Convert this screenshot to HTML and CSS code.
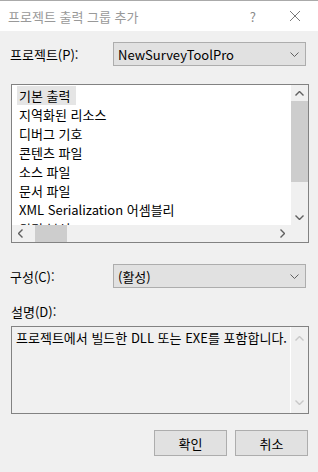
FILE: index.html
```html
<!DOCTYPE html>
<html lang="ko">

<head>
    <meta charset="UTF-8">
    <meta name="viewport" content="width=device-width, initial-scale=1.0">
    <title>프로젝트 출력 그룹 추가</title>
    <link rel="stylesheet" href="styles.css">
</head>

<body>

    <div class="titlebar">
        <span class="title">프로젝트 출력 그룹 추가</span>
        <span class="help">?</span>
        <svg class="close" width="12" height="12" viewBox="0 0 12 12">
            <path d="M1 1 L11 11 M11 1 L1 11" stroke="#7a7a7a" stroke-width="1" fill="none" />
        </svg>
    </div>

    <div class="dialog">
        <div class="row">
            <span class="label">프로젝트(P):</span>
            <div class="combo">
                <span>NewSurveyToolPro</span>
                <svg width="9" height="5" viewBox="0 0 9 5"><path d="M0.5 0.5 L4.5 4.5 L8.5 0.5" stroke="#606060" fill="none" /></svg>
            </div>
        </div>

        <div class="listbox">
            <div class="list-main">
                <ul class="items">
                    <li class="selected">기본 출력</li>
                    <li>지역화된 리소스</li>
                    <li>디버그 기호</li>
                    <li>콘텐츠 파일</li>
                    <li>소스 파일</li>
                    <li>문서 파일</li>
                    <li>XML Serialization 어셈블리</li>
                    <li>원격 분석</li>
                </ul>
                <div class="vscroll">
                    <svg width="9" height="5" viewBox="0 0 9 5"><path d="M0.5 4.5 L4.5 0.5 L8.5 4.5" stroke="#606060" stroke-width="1.4" fill="none" /></svg>
                    <div class="vtrack"><div class="vthumb"></div></div>
                    <svg width="9" height="5" viewBox="0 0 9 5"><path d="M0.5 0.5 L4.5 4.5 L8.5 0.5" stroke="#606060" stroke-width="1.4" fill="none" /></svg>
                </div>
            </div>
            <div class="hscroll">
                <svg width="5" height="9" viewBox="0 0 5 9"><path d="M4.5 0.5 L0.5 4.5 L4.5 8.5" stroke="#606060" stroke-width="1.4" fill="none" /></svg>
                <div class="htrack"><div class="hthumb"></div></div>
                <svg width="5" height="9" viewBox="0 0 5 9"><path d="M0.5 0.5 L4.5 4.5 L0.5 8.5" stroke="#606060" stroke-width="1.4" fill="none" /></svg>
                <div class="corner"></div>
            </div>
        </div>

        <div class="row config">
            <span class="label">구성(C):</span>
            <div class="combo">
                <span>(활성)</span>
                <svg width="9" height="5" viewBox="0 0 9 5"><path d="M0.5 0.5 L4.5 4.5 L8.5 0.5" stroke="#606060" fill="none" /></svg>
            </div>
        </div>

        <div class="desc-label">설명(D):</div>
        <div class="desc">
            <div class="desc-text">프로젝트에서 빌드한 DLL 또는 EXE를 포함합니다.</div>
            <div class="desc-scroll">
                <svg width="9" height="5" viewBox="0 0 9 5"><path d="M0.5 4.5 L4.5 0.5 L8.5 4.5" stroke="#c8c8c8" stroke-width="1.4" fill="none" /></svg>
                <svg width="9" height="5" viewBox="0 0 9 5"><path d="M0.5 0.5 L4.5 4.5 L8.5 0.5" stroke="#c8c8c8" stroke-width="1.4" fill="none" /></svg>
            </div>
        </div>

        <div class="buttons">
            <button>확인</button>
            <button>취소</button>
        </div>
    </div>

</body>

</html>
```

FILE: styles.css
```css
body {
    margin: 0;
    width: 318px;
    height: 472px;
    background-color: #f0f0f0;
    font-family: "Noto Sans CJK KR", "Noto Sans", sans-serif;
    font-size: 13px;
    color: #000;
    overflow: hidden;
}

.titlebar {
    height: 30px;
    border-top: 1px solid #aaaaaa;
    background-color: #fff;
    display: flex;
    align-items: center;
    padding-left: 8px;
    padding-right: 17px;
}

.title {
    flex: 1;
    color: #999;
}

.help {
    color: #8a8a8a;
    font-size: 13px;
    margin-right: 33px;
}

.dialog {
    padding: 11px 9px 0 11px;
    display: flex;
    flex-direction: column;
}

.row {
    display: flex;
    align-items: center;
}

.label {
    width: 103px;
    margin-left: -1px;
}

.combo {
    width: 193px;
    height: 24px;
    box-sizing: border-box;
    border: 1px solid #adadad;
    background-color: #e1e1e1;
    display: flex;
    align-items: center;
    justify-content: space-between;
    padding: 0 6px 0 4px;
}

.listbox {
    margin-top: 18px;
    height: 159px;
    box-sizing: border-box;
    border: 1px solid #828282;
    background-color: #fff;
    display: flex;
    flex-direction: column;
}

.list-main {
    flex: 1;
    display: flex;
    overflow: hidden;
}

.items {
    flex: 1;
    list-style: none;
    margin: 0;
    padding: 1px 0 0 5px;
    overflow: hidden;
}

.items li {
    height: 19px;
    line-height: 19px;
    padding-left: 2px;
    white-space: nowrap;
}

.items li.selected {
    display: inline-block;
    background-color: #e5e5e5;
    padding-right: 6px;
    vertical-align: top;
}

.vscroll {
    width: 17px;
    background-color: #f0f0f0;
    display: flex;
    flex-direction: column;
    align-items: center;
    padding-top: 6px;
    padding-bottom: 5px;
}

.vtrack {
    flex: 1;
    width: 100%;
    padding: 5px 0;
}

.vthumb {
    height: 81px;
    background-color: #cdcdcd;
}

.hscroll {
    height: 17px;
    background-color: #f0f0f0;
    display: flex;
    align-items: center;
    padding-left: 6px;
}

.htrack {
    flex: 1;
    height: 100%;
    padding: 0 5px;
    display: flex;
}

.hthumb {
    width: 32px;
    margin-left: 7px;
    background-color: #cdcdcd;
}

.corner {
    width: 17px;
    height: 100%;
    margin-left: 6px;
}

.config {
    margin-top: 21px;
}

.desc-label {
    margin-top: 14px;
    height: 19px;
    line-height: 19px;
}

.desc {
    margin-top: 5px;
    height: 88px;
    box-sizing: border-box;
    border: 1px solid #828282;
    display: flex;
}

.desc-text {
    flex: 1;
    padding: 1px 0 0 4px;
}

.desc-scroll {
    width: 17px;
    border-left: 1px solid #fff;
    display: flex;
    flex-direction: column;
    justify-content: space-between;
    align-items: center;
    padding: 9px 0 8px;
}

.buttons {
    margin-top: 16px;
    display: flex;
    justify-content: flex-end;
    gap: 8px;
    padding-right: 1px;
}

button {
    width: 73px;
    height: 26px;
    border: 1px solid #adadad;
    background-color: #e1e1e1;
    font-family: "Noto Sans CJK KR", "Noto Sans", sans-serif;
    font-size: 13px;
    color: #000;
    padding: 0;
}
```
